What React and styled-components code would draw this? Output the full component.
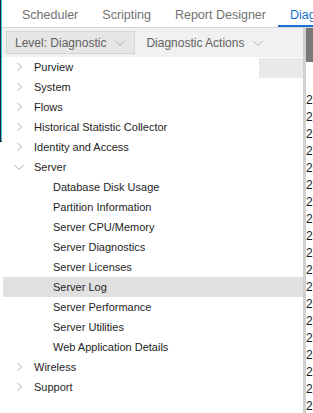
import styled, { createGlobalStyle } from "styled-components";

const GlobalStyle = createGlobalStyle`
    html, body {
        margin: 0;
        padding: 0;
        background: #ffffff;
        font-family: "Liberation Sans", Arial, sans-serif;
    }
    body {
        width: 313px;
        height: 413px;
        overflow: hidden;
    }
`;

const Page = styled.div`
    display: flex;
    align-items: flex-start;
    width: 313px;
    height: 413px;
    overflow: hidden;
`;

// edge of the window that sits behind this one
const WindowEdge = styled.div`
    flex-shrink: 0;
    box-sizing: border-box;
    width: 2px;
    height: 142px;
    border-left: 1px solid #1e2a30;
    border-bottom: 1px solid #1e2a30;
    background-color: #3cc0ea;
`;

const Main = styled.div`
    flex: 1;
    min-width: 0;
    height: 413px;
    display: flex;
    flex-direction: column;
`;

const TabBar = styled.nav`
    flex-shrink: 0;
    box-sizing: border-box;
    height: 28px;
    display: flex;
    padding-left: 8px;
    border-bottom: 1px solid #d2d2d2;
    overflow: hidden;
    white-space: nowrap;
`;

const Tab = styled.div`
    box-sizing: border-box;
    height: 27px;
    padding: 8px 12px 0;
    font-size: 12.5px;
    line-height: 14px;
    color: ${p => (p.$active ? "#1170cf" : "#727272")};
    border-bottom: 2px solid ${p => (p.$active ? "#1a6fd6" : "transparent")};
`;

const Body = styled.div`
    flex: 1;
    display: flex;
    min-height: 0;
`;

const LeftPanel = styled.div`
    flex-shrink: 0;
    width: 301px;
    display: flex;
    flex-direction: column;
`;

const Toolbar = styled.div`
    height: 29px;
    display: flex;
    align-items: center;
    gap: 2px;
    padding-left: 4px;
    background-color: #f1f1f1;
`;

const DropButton = styled.div`
    box-sizing: border-box;
    height: 23px;
    display: flex;
    align-items: center;
    gap: 9px;
    padding: 0 9px 0 8px;
    border: 1px solid ${p => (p.$selected ? "#d5d5d5" : "transparent")};
    background-color: ${p => (p.$selected ? "#e6e6e6" : "transparent")};
    font-size: 12px;
    color: #616161;
`;

const Tree = styled.ul`
    position: relative;
    margin: 0;
    padding: 0 0 0 1px;
    list-style: none;
`;

// leftover column header at the right of the tree
const ColumnStub = styled.div`
    position: absolute;
    top: 1px;
    right: 0;
    width: 44px;
    height: 20px;
    background-color: #e9e9e9;
`;

const Row = styled.li`
    height: 20px;
    display: flex;
    align-items: center;
    padding-left: ${p => (p.$child ? 50 : 0)}px;
    background-color: ${p => (p.$active ? "#e0e0e0" : "transparent")};
    font-size: 11px;
    color: #1e1e1e;
    white-space: nowrap;
`;

const Caret = styled.span`
    width: 31px;
    height: 20px;
    display: flex;
    align-items: center;
    padding-left: 11px;
    box-sizing: border-box;
`;

const Splitter = styled.div`
    flex-shrink: 0;
    width: 3px;
    background-color: #d0d0d0;
`;

const RightPanel = styled.div`
    flex: 1;
    min-width: 0;
    overflow: hidden;
`;

const GridHeader = styled.div`
    height: 34px;
    background-color: #787878;
`;

const GridGap = styled.div`
    height: 30px;
`;

const GridRow = styled.div`
    height: 17px;
    line-height: 17px;
    font-size: 12px;
    color: #161a2a;
    white-space: nowrap;
`;

const ChevronRight = () => (
    <svg width="10" height="10" viewBox="0 0 10 10">
        <path d="M3.5 1 L7.5 5 L3.5 9" fill="none" stroke="#a9a9a9" strokeWidth="1" />
    </svg>
);

const ChevronDown = ({ color = "#a9a9a9" }) => (
    <svg width="10" height="10" viewBox="0 0 10 10">
        <path d="M0.5 3 L5 7.5 L9.5 3" fill="none" stroke={color} strokeWidth="1" />
    </svg>
);

const tabs = ["Scheduler", "Scripting", "Report Designer", "Diagnostics"];

const serverChildren = [
    "Database Disk Usage",
    "Partition Information",
    "Server CPU/Memory",
    "Server Diagnostics",
    "Server Licenses",
    "Server Log",
    "Server Performance",
    "Server Utilities",
    "Web Application Details",
];

const dates = Array.from({ length: 19 }, (_, i) => `2018-05-${String(20 - i).padStart(2, "0")} 10:4${i % 10}`);

const App = () => {
    return (
        <>
            <GlobalStyle />
            <Page>
                <WindowEdge />
                <Main>
                    <TabBar>
                        {tabs.map(t => (
                            <Tab key={t} $active={t === "Diagnostics"}>{t}</Tab>
                        ))}
                    </TabBar>
                    <Body>
                        <LeftPanel>
                            <Toolbar>
                                <DropButton $selected>Level: Diagnostic <ChevronDown color="#b0b0b0" /></DropButton>
                                <DropButton>Diagnostic Actions <ChevronDown color="#b0b0b0" /></DropButton>
                            </Toolbar>
                            <Tree>
                                <ColumnStub />
                                {["Purview", "System", "Flows", "Historical Statistic Collector", "Identity and Access"].map(n => (
                                    <Row key={n}><Caret><ChevronRight /></Caret>{n}</Row>
                                ))}
                                <Row><Caret><ChevronDown /></Caret>Server</Row>
                                {serverChildren.map(n => (
                                    <Row key={n} $child $active={n === "Server Log"}>{n}</Row>
                                ))}
                                <Row><Caret><ChevronRight /></Caret>Wireless</Row>
                                <Row><Caret><ChevronRight /></Caret>Support</Row>
                            </Tree>
                        </LeftPanel>
                        <Splitter />
                        <RightPanel>
                            <GridHeader />
                            <GridGap />
                            {dates.map(d => (
                                <GridRow key={d}>{d}</GridRow>
                            ))}
                        </RightPanel>
                    </Body>
                </Main>
            </Page>
        </>
    );
};

export default App;
